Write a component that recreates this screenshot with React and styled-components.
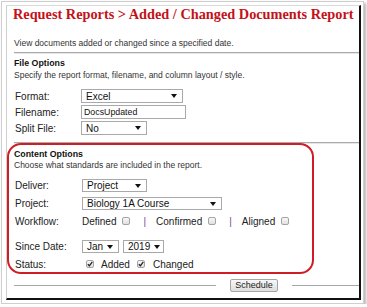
import styled, { createGlobalStyle } from 'styled-components';

const GlobalStyle = createGlobalStyle`
  html, body {
    margin: 0;
    padding: 0;
    background: #fff;
  }
  * {
    box-sizing: border-box;
  }
`;

const Frame = styled.div`
  margin: 1px 0 0 1px;
  width: 363px;
  height: 303px;
  padding: 3px 2px 2px 4px;
  border: 1px solid #cfcfcf;
  background: #fff;
  box-shadow: 2px 2px 3px rgba(0, 0, 0, 0.3);
`;

const Panel = styled.div`
  width: 355px;
  height: 295px;
  border-top: 1px solid #dadada;
  border-left: 1px solid #cfcfcf;
  border-right: 2px solid #111;
  border-bottom: 2px solid #111;
  font-family: 'Liberation Sans', Arial, sans-serif;
  color: #222;
  overflow: hidden;
`;

const Title = styled.h1`
  margin: 0;
  padding-left: 6px;
  font-family: 'Liberation Serif', 'Times New Roman', serif;
  font-size: 14.3px;
  line-height: 16px;
  font-weight: bold;
  color: #c4121a;
  white-space: nowrap;
`;

const Text = styled.div`
  padding-left: ${(p) => p.$indent || 7}px;
  margin-top: ${(p) => p.$top || 0}px;
  font-size: 8.5px;
  line-height: ${(p) => p.$lh || 11}px;
  color: #333;
  white-space: nowrap;
`;

const Heading = styled.div`
  padding-left: ${(p) => p.$indent || 7}px;
  margin-top: ${(p) => p.$top || 0}px;
  font-size: 8.8px;
  line-height: 12px;
  font-weight: bold;
  color: #111;
`;

const Rule = styled.div`
  margin: ${(p) => p.$top || 0}px 0 0 7px;
  height: 2px;
  border-top: 1px solid #ababab;
  border-bottom: 1px solid #e6e6e6;
`;

const Form = styled.div`
  display: flex;
  flex-direction: column;
  gap: ${(p) => p.$gap || 2}px;
  margin-top: ${(p) => p.$top || 0}px;
  padding-left: ${(p) => p.$indent || 8}px;
`;

const Row = styled.div`
  display: flex;
  align-items: center;
  height: ${(p) => p.$h || 14}px;
  margin-top: ${(p) => p.$top || 0}px;
`;

const Label = styled.span`
  width: ${(p) => p.$w || 66}px;
  flex: none;
  font-size: 10px;
  color: #222;
`;

const SelectBox = styled.div`
  display: flex;
  align-items: center;
  justify-content: space-between;
  width: ${(p) => p.$w}px;
  height: ${(p) => p.$h || 14}px;
  margin-right: 4px;
  padding: 0 5px 0 4px;
  border: 1px solid #a9a9a9;
  background: #fff;
  font-size: 10px;
  color: #111;
`;

const Arrow = styled.svg`
  width: 6px;
  height: 4px;
  flex: none;
  margin-left: 4px;
`;

const Select = ({ value, w, h }) => (
  <SelectBox $w={w} $h={h}>
    <span>{value}</span>
    <Arrow viewBox="0 0 6 4">
      <path d="M0 0h6L3 4z" fill="#111" />
    </Arrow>
  </SelectBox>
);

const Input = styled.div`
  display: flex;
  align-items: center;
  width: 105px;
  height: 14px;
  padding-left: 2px;
  border: 1px solid #a9a9a9;
  font-size: 8.8px;
  color: #111;
`;

const Content = styled.section`
  width: 307px;
  margin-top: -1px;
  padding: 3px 0 2px 0;
  border: 2px solid #d01c24;
  border-radius: 14px;
`;

const Choice = styled.span`
  font-size: 10px;
  color: #222;
  margin-right: ${(p) => p.$mr || 0}px;
`;

const Bar = styled.span`
  font-size: 10px;
  color: #7b3f9e;
  margin: 0 10px 0 13px;
`;

const Box = styled.span`
  display: inline-flex;
  align-items: center;
  justify-content: center;
  width: 8px;
  height: 8px;
  flex: none;
  margin: ${(p) => p.$m || '0'};
  border: 1px solid #a4a4a4;
  border-radius: 2px;
  background: linear-gradient(#f8f8f8, #e0e0e0);
`;

const Check = ({ checked, m }) => (
  <Box $m={m}>
    {checked && (
      <svg width="6" height="6" viewBox="0 0 6 6">
        <path d="M0.8 3.2 2.4 4.8 5.3 0.8" fill="none" stroke="#222" strokeWidth="1.3" />
      </svg>
    )}
  </Box>
);

const Footer = styled.div`
  display: flex;
  align-items: center;
  margin-top: 5px;
  padding-left: 7px;
  height: 13px;
`;

const Line = styled.div`
  height: 1px;
  background: #a8a8a8;
  flex: ${(p) => (p.$w ? 'none' : '1')};
  width: ${(p) => (p.$w ? `${p.$w}px` : 'auto')};
`;

const Button = styled.button`
  width: 48px;
  height: 13px;
  margin: 0 14px;
  padding: 0;
  border: 1px solid #a6a6a6;
  border-radius: 2px;
  background: linear-gradient(#f7f7f7, #dedede);
  font-family: 'Liberation Sans', Arial, sans-serif;
  font-size: 9px;
  line-height: 11px;
  color: #222;
`;

export default function App() {
  return (
    <>
      <GlobalStyle />
      <Frame>
        <Panel>
          <Title>Request Reports &gt; Added / Changed Documents Report</Title>
          <Text $top={16}>View documents added or changed since a specified date.</Text>
          <Rule $top={3} />
          <Heading $top={3}>File Options</Heading>
          <Text $lh={12}>Specify the report format, filename, and column layout / style.</Text>
          <Form $top={8}>
            <Row>
              <Label>Format:</Label>
              <Select value="Excel" w={102} />
            </Row>
            <Row>
              <Label>Filename:</Label>
              <Input>DocsUpdated</Input>
            </Row>
            <Row>
              <Label>Split File:</Label>
              <Select value="No" w={66} />
            </Row>
          </Form>
          <Rule $top={7} />
          <Content>
            <Heading $indent={5}>Content Options</Heading>
            <Text $indent={5}>Choose what standards are included in the report.</Text>
            <Form $top={8} $gap={5} $indent={6}>
              <Row $h={13}>
                <Label $w={67}>Deliver:</Label>
                <Select value="Project" w={65} h={13} />
              </Row>
              <Row $h={13}>
                <Label $w={67}>Project:</Label>
                <Select value="Biology 1A Course" w={140} h={13} />
              </Row>
              <Row $h={12}>
                <Label $w={67}>Workflow:</Label>
                <Choice $mr={6}>Defined</Choice>
                <Check />
                <Bar>|</Bar>
                <Choice $mr={6}>Confirmed</Choice>
                <Check />
                <Bar>|</Bar>
                <Choice $mr={6}>Aligned</Choice>
                <Check />
              </Row>
              <Row $h={13} $top={8}>
                <Label $w={67}>Since Date:</Label>
                <Select value="Jan" w={37} h={13} />
                <Select value="2019" w={41} h={13} />
              </Row>
              <Row $h={12}>
                <Label $w={67}>Status:</Label>
                <Check checked m="0 7px 0 4px" />
                <Choice $mr={7}>Added</Choice>
                <Check checked m="0 8px 0 0" />
                <Choice>Changed</Choice>
              </Row>
            </Form>
          </Content>
          <Footer>
            <Line />
            <Button>Schedule</Button>
            <Line $w={67} />
          </Footer>
        </Panel>
      </Frame>
    </>
  );
}
